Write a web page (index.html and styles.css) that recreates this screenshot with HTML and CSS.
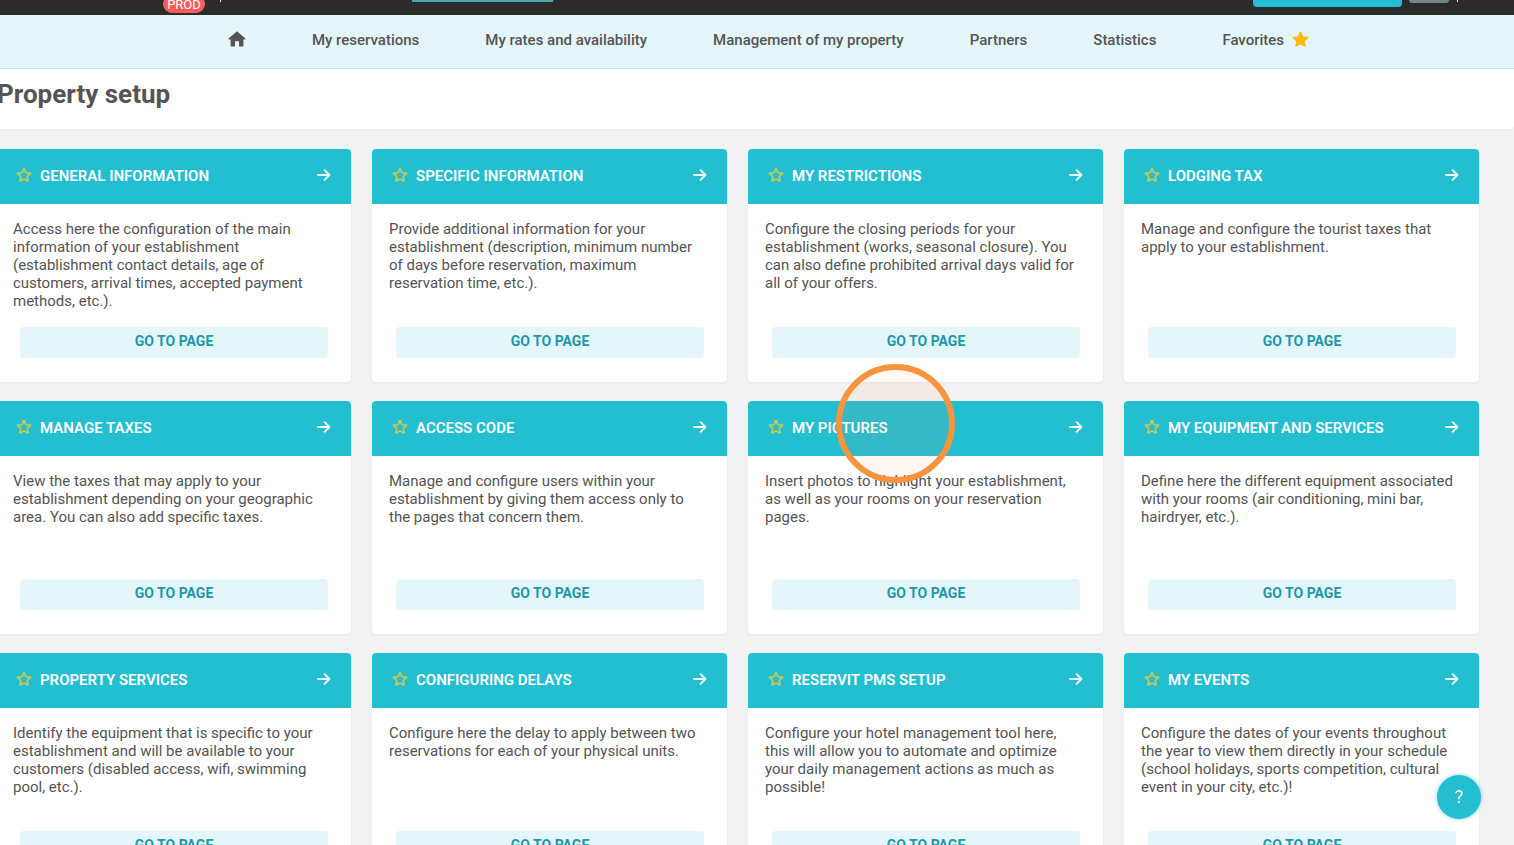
FILE: index.html
```html
<!DOCTYPE html>
<html lang="en">
<head>
<meta charset="utf-8">
<title>Property setup</title>
<link rel="stylesheet" href="styles.css">
</head>
<body>
<svg class="sprite" aria-hidden="true">
  <symbol id="star-outline" viewBox="0 0 16 16"><path d="M8 1.3l2 4.400 4.800.5-3.600 3.200 1 4.800L8 11.800l-4.200 2.400 1-4.800L1.200 6.200 6 5.700z" fill="none" stroke="currentColor" stroke-width="1.5" stroke-linejoin="round"/></symbol>
  <symbol id="arrow" viewBox="0 0 14 14"><path d="M1 7h11M7.600 2.200L12.400 7l-4.800 4.800" fill="none" stroke="currentColor" stroke-width="1.800" stroke-linecap="round" stroke-linejoin="round"/></symbol>
</svg>
<header class="topbar">
  <span class="env">PROD</span>
  <span class="divider"></span>
  <span class="tab-line"></span>
  <span class="top-action"></span>
  <span class="avatar"></span>
  <span class="divider"></span>
</header>
<nav class="nav">
  <a class="nav-link" href="#" aria-label="Home"><svg class="home" viewBox="0 0 18 16"><path d="M9 0.2L17.400 7.600q.6.9-.4 1H15.400V14.600q0 1-1 1H11V10.200H7V15.600H3.600q-1 0-1-1V8.600H1q-1-.1-.4-1z" fill="currentColor"/></svg></a>
  <a class="nav-link" href="#">My reservations</a>
  <a class="nav-link" href="#">My rates and availability</a>
  <a class="nav-link" href="#">Management of my property</a>
  <a class="nav-link" href="#">Partners</a>
  <a class="nav-link" href="#">Statistics</a>
  <a class="nav-link" href="#">Favorites <svg class="fav" viewBox="0 0 16 16"><path d="M8 1l2.100 4.500 4.900.6-3.600 3.400.9 4.900L8 12l-4.300 2.400.9-4.900L1 6.100l4.900-.6z" fill="currentColor" stroke="currentColor" stroke-width="1.200" stroke-linejoin="round"/></svg></a>
</nav>
<div class="page-head"><h1 class="title">Property setup</h1></div>
<main class="grid">
  <section class="card">
    <header class="card-head"><svg class="star"><use href="#star-outline"/></svg><h2 class="card-title">GENERAL INFORMATION</h2><svg class="arrow"><use href="#arrow"/></svg></header>
    <p class="text">Access here the configuration of the main information of your establishment (establishment contact details, age of customers, arrival times, accepted payment methods, etc.).</p>
    <button class="go" type="button">GO TO PAGE</button>
  </section>
  <section class="card">
    <header class="card-head"><svg class="star"><use href="#star-outline"/></svg><h2 class="card-title">SPECIFIC INFORMATION</h2><svg class="arrow"><use href="#arrow"/></svg></header>
    <p class="text">Provide additional information for your establishment (description, minimum number of days before reservation, maximum reservation time, etc.).</p>
    <button class="go" type="button">GO TO PAGE</button>
  </section>
  <section class="card">
    <header class="card-head"><svg class="star"><use href="#star-outline"/></svg><h2 class="card-title">MY RESTRICTIONS</h2><svg class="arrow"><use href="#arrow"/></svg></header>
    <p class="text">Configure the closing periods for your establishment (works, seasonal closure). You can also define prohibited arrival days valid for all of your offers.</p>
    <button class="go" type="button">GO TO PAGE</button>
  </section>
  <section class="card">
    <header class="card-head"><svg class="star"><use href="#star-outline"/></svg><h2 class="card-title">LODGING TAX</h2><svg class="arrow"><use href="#arrow"/></svg></header>
    <p class="text">Manage and configure the tourist taxes that apply to your establishment.</p>
    <button class="go" type="button">GO TO PAGE</button>
  </section>
  <section class="card">
    <header class="card-head"><svg class="star"><use href="#star-outline"/></svg><h2 class="card-title">MANAGE TAXES</h2><svg class="arrow"><use href="#arrow"/></svg></header>
    <p class="text">View the taxes that may apply to your establishment depending on your geographic area. You can also add specific taxes.</p>
    <button class="go" type="button">GO TO PAGE</button>
  </section>
  <section class="card">
    <header class="card-head"><svg class="star"><use href="#star-outline"/></svg><h2 class="card-title">ACCESS CODE</h2><svg class="arrow"><use href="#arrow"/></svg></header>
    <p class="text">Manage and configure users within your establishment by giving them access only to the pages that concern them.</p>
    <button class="go" type="button">GO TO PAGE</button>
  </section>
  <section class="card">
    <header class="card-head"><svg class="star"><use href="#star-outline"/></svg><h2 class="card-title">MY PICTURES</h2><svg class="arrow"><use href="#arrow"/></svg></header>
    <p class="text">Insert photos to highlight your establishment, as well as your rooms on your reservation pages.</p>
    <button class="go" type="button">GO TO PAGE</button>
    <span class="marker"></span>
  </section>
  <section class="card">
    <header class="card-head"><svg class="star"><use href="#star-outline"/></svg><h2 class="card-title">MY EQUIPMENT AND SERVICES</h2><svg class="arrow"><use href="#arrow"/></svg></header>
    <p class="text">Define here the different equipment associated with your rooms (air conditioning, mini bar, hairdryer, etc.).</p>
    <button class="go" type="button">GO TO PAGE</button>
  </section>
  <section class="card">
    <header class="card-head"><svg class="star"><use href="#star-outline"/></svg><h2 class="card-title">PROPERTY SERVICES</h2><svg class="arrow"><use href="#arrow"/></svg></header>
    <p class="text">Identify the equipment that is specific to your establishment and will be available to your customers (disabled access, wifi, swimming pool, etc.).</p>
    <button class="go" type="button">GO TO PAGE</button>
  </section>
  <section class="card">
    <header class="card-head"><svg class="star"><use href="#star-outline"/></svg><h2 class="card-title">CONFIGURING DELAYS</h2><svg class="arrow"><use href="#arrow"/></svg></header>
    <p class="text">Configure here the delay to apply between two reservations for each of your physical units.</p>
    <button class="go" type="button">GO TO PAGE</button>
  </section>
  <section class="card">
    <header class="card-head"><svg class="star"><use href="#star-outline"/></svg><h2 class="card-title">RESERVIT PMS SETUP</h2><svg class="arrow"><use href="#arrow"/></svg></header>
    <p class="text">Configure your hotel management tool here, this will allow you to automate and optimize your daily management actions as much as possible!</p>
    <button class="go" type="button">GO TO PAGE</button>
  </section>
  <section class="card">
    <header class="card-head"><svg class="star"><use href="#star-outline"/></svg><h2 class="card-title">MY EVENTS</h2><svg class="arrow"><use href="#arrow"/></svg></header>
    <p class="text">Configure the dates of your events throughout the year to view them directly in your schedule (school holidays, sports competition, cultural event in your city, etc.)!</p>
    <button class="go" type="button">GO TO PAGE</button>
  </section>
</main>
<button class="help" type="button" aria-label="Help">?</button>
</body>
</html>
```
FILE: styles.css
```css
* { box-sizing: border-box; }

body {
  margin: 0;
  height: 100vh;
  overflow: hidden;
  background: #f2f2f2;
  color: #545454;
  font-family: Roboto, "Liberation Sans", sans-serif;
  font-size: 15px;
  line-height: 18px;
}

.sprite { position: absolute; width: 0; height: 0; }

.topbar {
  display: flex;
  align-items: flex-start;
  height: 15px;
  padding: 0 56px 0 163px;
  background: #2b2b2b;
}

.env {
  width: 42px;
  height: 18px;
  margin-top: -5px;
  border-radius: 9px;
  background: #f95c5a;
  color: #ffffff;
  font-size: 13px;
  line-height: 20px;
  text-align: center;
}

.divider { width: 1px; height: 2px; margin-left: 15px; background: #ffffff; }
.tab-line { width: 141px; height: 2px; margin-left: 191px; background: #4fa6b0; }
.top-action { width: 149px; height: 7px; margin-left: auto; border-radius: 0 0 4px 4px; background: #24bed1; }
.avatar { width: 40px; height: 3px; margin-left: 7px; border-radius: 0 0 10px 10px; background: #758487; }
.avatar + .divider { margin-left: 8px; }

.nav {
  display: flex;
  justify-content: center;
  gap: 66px;
  height: 54px;
  padding: 16px 0 0 23px;
  border-bottom: 1px solid #b9e6ea;
  background: #e4f6f9;
}

.nav-link {
  display: flex;
  align-items: center;
  gap: 8px;
  height: 18px;
  color: #545454;
  font-weight: 500;
  text-decoration: none;
  white-space: nowrap;
}

.home { width: 18px; height: 16px; margin-bottom: 2px; }
.fav { width: 17px; height: 17px; margin-bottom: 2px; color: #fdba12; }

.page-head {
  height: 60px;
  padding: 9px 0 0;
  border-radius: 0 0 4px 0;
  background: #ffffff;
  box-shadow: 0 1px 2px rgba(0, 0, 0, 0.04);
}

.title { margin: 0 0 0 -3px; font-size: 26px; line-height: 32px; font-weight: 700; }

.grid {
  display: grid;
  grid-template-columns: repeat(4, 1fr);
  gap: 19px 21px;
  margin: 20px 35px 0 -4px;
}

.card {
  position: relative;
  display: flex;
  flex-direction: column;
  min-height: 233px;
  padding-bottom: 24px;
  border-radius: 4px;
  background: #ffffff;
  box-shadow: 0 1px 2px rgba(0, 0, 0, 0.05);
}

.card-head {
  display: flex;
  align-items: center;
  height: 55px;
  padding: 0 20px 3px;
  border-radius: 4px 4px 0 0;
  background: #24bed1;
  color: #ffffff;
}

.star { width: 16px; height: 16px; color: #d5cb45; }
.card-title { flex: 1; margin: 0 0 0 8px; padding-top: 1px; font-size: 15px; font-weight: 600; }
.arrow { width: 14px; height: 14px; }
.text { flex: 1; margin: 0; padding: 16px 22px 0 17px; }

.go {
  height: 31px;
  margin: 0 23px 0 24px;
  padding: 0 0 3px;
  border: 0;
  border-radius: 4px;
  background: #e4f6f9;
  color: #1c98ab;
  font: 700 14px/18px Roboto, "Liberation Sans", sans-serif;
}

.marker {
  position: absolute;
  top: -37px;
  left: 88px;
  width: 119px;
  height: 119px;
  border: 6px solid #f8943d;
  border-radius: 50%;
  background: rgba(248, 148, 61, 0.07);
}

.help {
  position: fixed;
  right: 33px;
  bottom: 26px;
  width: 44px;
  height: 44px;
  padding: 0;
  border: 0;
  border-radius: 50%;
  background: #24bed1;
  box-shadow: 0 0 4px rgba(36, 190, 209, 0.6);
  color: #ffffff;
  font: 400 18px/44px Roboto, "Liberation Sans", sans-serif;
}
```
